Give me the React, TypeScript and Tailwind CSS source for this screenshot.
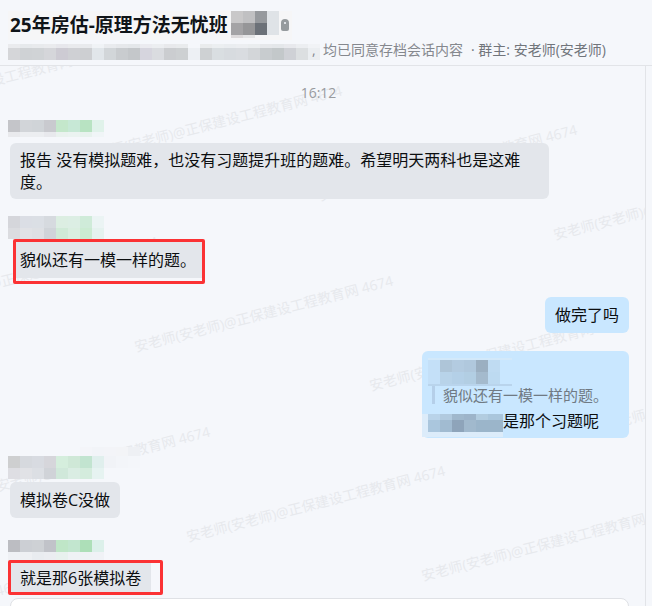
import React from 'react';
import clsx from 'clsx';

interface MosaicRow {
  height: number;
  colors: string[];
}

interface MosaicProps {
  rows: MosaicRow[];
  className?: string;
}

const CELL = 12;

// Pixelated block that hides a name
const Mosaic: React.FC<MosaicProps> = ({ rows, className }) => {
  const width = Math.max(...rows.map((row) => row.colors.length)) * CELL;
  const height = rows.reduce((sum, row) => sum + row.height, 0);
  let top = 0;

  return (
    <svg
      width={width}
      height={height}
      shapeRendering="crispEdges"
      aria-hidden="true"
      className={clsx('block shrink-0', className)}
    >
      {rows.map((row, r) => {
        const y = top;
        top += row.height;
        return row.colors.map((color, c) => (
          <rect key={`${r}-${c}`} x={c * CELL} y={y} width={CELL} height={row.height} fill={color} />
        ));
      })}
    </svg>
  );
};

const titleMosaic: MosaicRow[] = [
  { height: 12, colors: ['#c9c8c9', '#c0c0c2', '#96999d', '#dfe3e7'] },
  { height: 12, colors: ['#a4a3a5', '#969698', '#6c7178', '#dfe3e7'] },
  { height: 3, colors: ['#dddadb', '#e5e5e6', 'none', 'none'] },
];

const membersMosaic: MosaicRow[] = [
  {
    height: 4,
    colors: [
      '#eaebee', '#e6e9ec', '#e8eaed', '#eaebee', '#e7e7ec', '#e9eaed', '#e8eaed', '#f0f3f6', '#e9ebee',
      '#e6e8eb', '#e4e7ea', '#ebebf0', '#eceef1', '#e8e9ec', '#e9ebed', '#f5f7fb', '#eaeced', '#eceff1',
      '#eaedf0', '#eceef1', '#eaedef', '#e6e8eb', '#e4e7ea', '#e8e9ed', '#eceef1', '#f1f3f6',
    ],
  },
  {
    height: 12,
    colors: [
      '#d5d6d9', '#cfd2d5', '#d0d3d6', '#d5d6da', '#cdcbd3', '#cfd0d4', '#cdcfd2', '#e1e6ea', '#d2d6d9',
      '#c9cccf', '#c4c7ca', '#d6d5de', '#dadce0', '#cbcdd0', '#cdd0d2', '#edf0f4', '#ced1d3', '#d9dee1',
      '#d7dbdf', '#d9dce0', '#d3d6d9', '#c8cccf', '#c3c8ca', '#cfd1d6', '#dcdfe1', '#ebeef1',
    ],
  },
];

const nameMosaics: MosaicRow[][] = [
  [
    { height: 12, colors: ['#c4c5c9', '#d2d5d9', '#d0d4d8', '#c9cacf', '#c4e7cb', '#c7e8d6', '#b8e3c2', '#e0f2ea'] },
    { height: 5, colors: ['#e9eaed', '#eceef1', '#eceef1', '#e8e9ed', '#eaf2ef', '#ebf3f1', '#e8f2ee', '#f0f5f7'] },
  ],
  [
    { height: 12, colors: ['#d5d6db', '#dbdee5', '#dbdfe5', '#d6dadf', '#dceee2', '#dceee4', '#cfebd9', '#ebf4f4'] },
    { height: 11, colors: ['#dbdce0', '#e1e2e6', '#dee0e4', '#d0d4d9', '#d0ead7', '#daeee0', '#cbebd2', '#e5f2ef'] },
  ],
  [
    {
      height: 9,
      colors: ['none', 'none', 'none', 'none', 'none', 'none', '#f4f5f9', '#f2f4f8', '#f3f4f8', '#f3f4f7', '#eef0f4'],
    },
    {
      height: 12,
      colors: [
        '#cecfd0', '#d6d9de', '#d8dbe1', '#d6d6db', '#d5eedd', '#cfe8d7', '#c2e4d0', '#e0efed', '#f1f3f7', '#f3f5f9', '#f4f6fa',
      ],
    },
    { height: 11, colors: ['#dedee3', '#e1e2e6', '#dcdfe4', '#d0d3d8', '#d0e8da', '#daede3', '#d4ecdd', '#e6f3f1'] },
  ],
  [
    { height: 12, colors: ['#bcbdc2', '#cccfd4', '#ced1d5', '#c1c3c9', '#bfe6c7', '#c2e6cf', '#addfb8', '#dcf0ea'] },
    { height: 8, colors: ['#eff1f5', '#eef0f3', '#e9ecf0', '#ebedf1', '#e8f1ee', '#eff2f5', '#eff2f5', '#f0f2f6'] },
  ],
];

const quoteMosaic: MosaicRow[] = [
  { height: 2, colors: ['#d3e9fa', '#d3e9fa', '#d3e9fa', '#d3e9fa', '#d3e9fa', '#d3e9fa', '#d3e9fa'] },
  { height: 12, colors: ['#c4e0f8', '#aec5d8', '#b3cbe0', '#b0c8dd', '#9bafc1', '#bfdbf2', 'none'] },
  { height: 12, colors: ['#c4e0f8', '#b8d3e9', '#b4d0e7', '#b2cee3', '#a4bacd', '#bddaf1', 'none'] },
  { height: 2, colors: ['#b9d4ec', '#b9d4ec', '#b9d4ec', '#b9d4ec', '#b9d4ec', '#b9d4ec', '#b9d4ec'] },
];

const replyMosaic: MosaicRow[] = [
  { height: 6, colors: ['#b9d3e9', '#b1cadf', '#a0b8cd', '#9db4ca', '#b2cce0', '#aac6dc', '#aac6dc'] },
  { height: 12, colors: ['#aac6dd', '#a1bbd1', '#8ea4ba', '#a1b9cd', '#9bb5ca', '#9bb5ca', '#9bb5ca'] },
  { height: 5, colors: ['#dcecfa', '#dcecfa', '#dcecfa', '#dcecfa', '#dcecfa', '#dcecfa', '#dcecfa'] },
];

// Start of each watermark line inside the chat pane
const watermarks = [
  [-150, 57],
  [85, 96],
  [320, 135],
  [555, 174],
  [-99, 247],
  [136, 286],
  [371, 325],
  [606, 364],
  [-47, 437],
  [188, 476],
  [423, 515],
  [-230, 589],
];

const Watermark: React.FC = () => (
  <svg className="absolute inset-0 h-full w-full fill-[#e7e9ed] text-sm" aria-hidden="true">
    {watermarks.map(([x, y]) => (
      <text key={`${x},${y}`} transform={`translate(${x} ${y}) rotate(-14.5)`}>
        安老师(安老师)@正保建设工程教育网 4674
      </text>
    ))}
  </svg>
);

interface BubbleProps {
  own?: boolean;
  className?: string;
  children: React.ReactNode;
}

const Bubble: React.FC<BubbleProps> = ({ own, className, children }) => (
  <div
    className={clsx(
      'flex min-h-9 w-fit items-center rounded-md px-2.5 py-1.5',
      own ? 'self-end bg-[#c9e7ff]' : 'ml-0.5 bg-[#e3e6eb]',
      className,
    )}
  >
    <p>{children}</p>
  </div>
);

const Header: React.FC = () => (
  <header className="h-[66px] shrink-0 border-b border-[#e2e4e8] px-2 pt-[11px]">
    <div className="flex h-[29px] w-fit items-start bg-[#f6f6f7] pr-[3px] pl-0.5">
      <h1 className="pr-[3px] text-[19px] leading-7 font-bold whitespace-nowrap text-[#101418]">
        25年房估-原理方法无忧班
      </h1>
      <Mosaic rows={titleMosaic} />
      <svg width="8" height="12" viewBox="0 0 8 12" className="mt-2 ml-0.5" aria-hidden="true">
        <path d="M0 4a4 4 0 0 1 8 0v6a2 2 0 0 1-2 2H2a2 2 0 0 1-2-2z" fill="#969b9e" />
        <rect x="3" y="3" width="2" height="2" rx="1" fill="#f5f7fb" />
      </svg>
    </div>
    <div className="flex h-5 items-center text-sm leading-5 whitespace-nowrap text-[#85888e]">
      <Mosaic rows={membersMosaic} className="mt-1 -mr-2" />
      <span className="relative w-[11px]">,</span>
      <span>均已同意存档会话内容</span>
      <span className="ml-2 text-[#71757b]">· 群主: 安老师(安老师)</span>
    </div>
  </header>
);

const App: React.FC = () => {
  return (
    <div className="flex h-screen flex-col overflow-hidden bg-[#f5f7fb] font-['Open_Sans','Noto_Sans_CJK_SC',sans-serif]">
      <Header />

      <main className="relative mr-1.5 min-h-0 flex-1 overflow-hidden border-r border-[#e2e4e8]">
        <Watermark />

        <div className="relative flex flex-col items-start pr-4 pl-2 text-base leading-[22px] text-[#0c0e10]">
          <time className="mt-[17px] self-center text-sm leading-5 text-[#999b9f]">16:12</time>

          <Mosaic rows={nameMosaics[0]} className="mt-[17px]" />
          <Bubble className="mt-1.5 max-w-[539px]">
            报告 没有模拟题难，也没有习题提升班的题难。希望明天两科也是这难度。
          </Bubble>

          <Mosaic rows={nameMosaics[1]} className="mt-[17px]" />
          <div className="ml-[5px] rounded-xs border-3 border-[#fb3234] pb-[3px]">
            <p className="bg-[#e3e6eb] py-[7px] pr-1.5 pl-1">貌似还有一模一样的题。</p>
          </div>

          <Bubble own className="mt-[13px]">做完了吗</Bubble>

          {/* Reply with the quoted message */}
          <div className="mt-[18px] flex w-[207px] flex-col self-end rounded-md bg-[#c9e7ff] pt-[7px]">
            <Mosaic rows={quoteMosaic} className="ml-1.5" />
            <blockquote className="ml-2.5 flex h-[18px] items-center border-l-3 border-[#b5cfe9] pl-2 text-[15px] whitespace-nowrap text-[#707a84]">
              貌似还有一模一样的题。
            </blockquote>
            <div className="mt-2.5 flex h-6 items-start">
              <div className="w-[81px] shrink-0 overflow-hidden bg-[#dcecfa] pl-1.5">
                <Mosaic rows={replyMosaic} />
              </div>
              <p className="-mt-1 whitespace-nowrap">是那个习题呢</p>
            </div>
          </div>

          <Mosaic rows={nameMosaics[2]} className="mt-[9px]" />
          <Bubble className="mt-[3px]">模拟卷C没做</Bubble>

          <Mosaic rows={nameMosaics[3]} className="mt-[22px]" />
          <div className="rounded-xs border-3 border-[#fb3234] pr-[9px]">
            <p className="bg-[#e3e6eb] pt-1 pr-2.5 pb-[3px] pl-[9px]">就是那6张模拟卷</p>
          </div>

          <div className="mt-[3px] ml-0.5 h-20 self-stretch rounded-lg border border-[#dfe1e5] bg-white" />
        </div>
      </main>
    </div>
  );
};

export default App;
